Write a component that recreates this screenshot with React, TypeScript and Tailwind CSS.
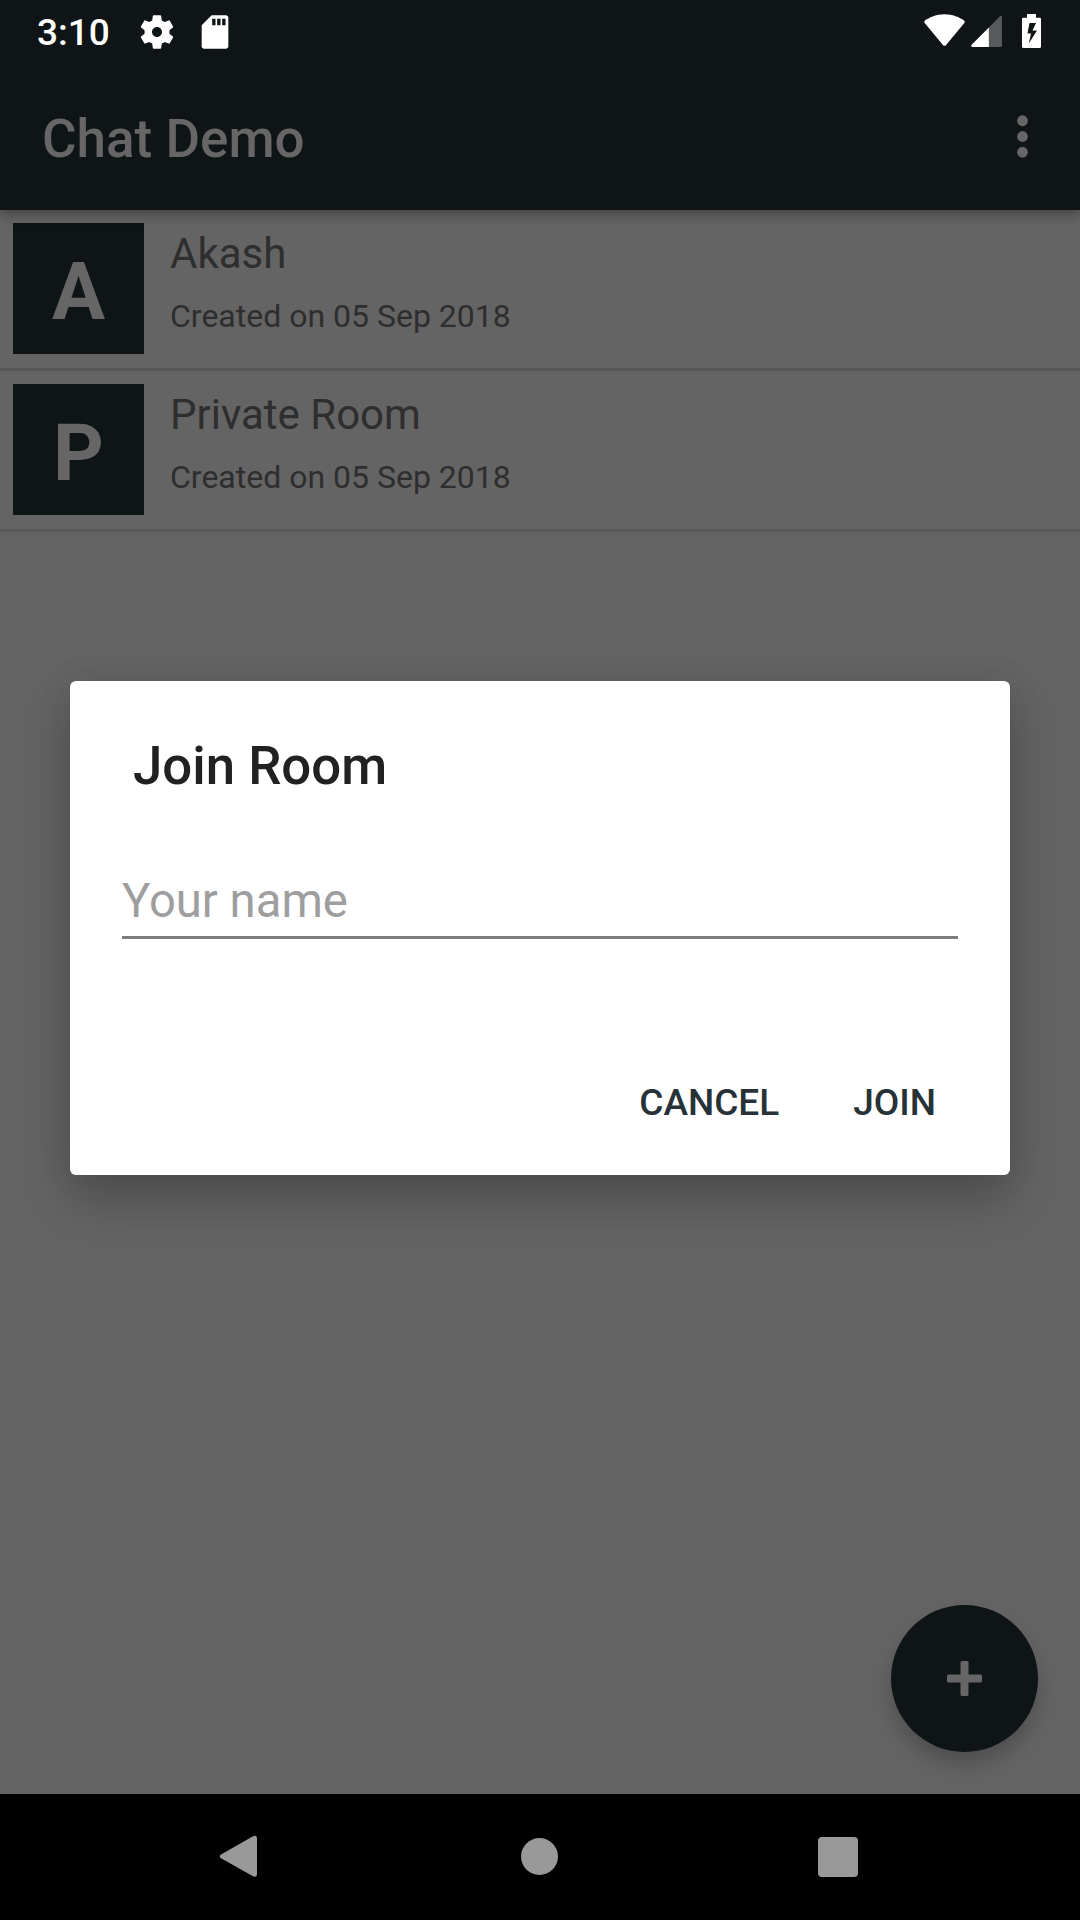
import React from "react";

function StatusBar() {
  return (
    <div className="flex h-[63px] items-center text-white">
      <span className="ml-[37px] w-[73px] pt-[2px] text-[37px] leading-[43px] font-medium whitespace-nowrap">3:10</span>
      <svg className="ml-[27px] h-[40px] w-[40px]" viewBox="0 0 24 24" fill="currentColor">
        <path d="M19.43 12.98c.04-.32.07-.64.07-.98s-.03-.66-.07-.98l2.11-1.65c.19-.15.24-.42.12-.64l-2-3.46c-.12-.22-.39-.3-.61-.22l-2.49 1c-.52-.4-1.08-.73-1.69-.98l-.38-2.65C14.46 2.18 14.25 2 14 2h-4c-.25 0-.46.18-.49.42l-.38 2.65c-.61.25-1.17.59-1.69.98l-2.49-1c-.23-.09-.49 0-.61.22l-2 3.46c-.13.22-.07.49.12.64l2.11 1.65c-.04.32-.07.65-.07.98s.03.66.07.98l-2.11 1.65c-.19.15-.24.42-.12.64l2 3.46c.12.22.39.3.61.22l2.49-1c.52.4 1.08.73 1.69.98l.38 2.65c.03.24.24.42.49.42h4c.25 0 .46-.18.49-.42l.38-2.65c.61-.25 1.17-.59 1.69-.98l2.49 1c.23.09.49 0 .61-.22l2-3.46c.12-.22.07-.49-.12-.64l-2.11-1.65zM12 15c-1.660 0-3-1.340-3-3s1.340-3 3-3 3 1.340 3 3-1.340 3-3 3z" />
      </svg>
      <svg className="ml-[18px] h-[40px] w-[40px]" viewBox="0 0 24 24" fill="currentColor">
        <path d="M18.500 2h-8.500L4.020 8 4 20.500c0 .9.6 1.500 1.500 1.500h13c.9 0 1.500-.6 1.500-1.500V3.500c0-.9-.6-1.500-1.500-1.500zM12.300 8h-2V4h2v4zm3 0h-2V4h2v4zm3 0h-2V4h2v4z" />
      </svg>
      <div className="mr-[39px] ml-auto flex h-[36px] items-start">
        <svg className="h-[36px] w-[42px]" viewBox="-0.5 0 42 36" fill="currentColor">
          <path d="M21 .3C29 .3 36 3.300 40.500 6.500Q41.900 7.600 40.800 9L22.600 31Q21 32.700 19.400 31L1.200 9Q.1 7.600 1.500 6.500C6 3.300 13 .3 21 .3Z" />
        </svg>
        <svg className="ml-[5px] h-[36px] w-[32px]" viewBox="-0.4 0 32 36" fill="currentColor">
          <path opacity=".3" d="M18.500 13.500L29.600 2.300Q31.500 1 31.500 3.500V31.500Q31.500 33 30 33H18.500Z" />
          <path d="M18.500 13.500V33H1.800Q.1 32.500 1 31Z" />
        </svg>
        <svg className="ml-[20px] h-[36px] w-[19px]" viewBox="0 0 19 36" fill="currentColor">
          <path fillRule="evenodd" d="M5 0H14V3.700H17.800Q19 3.700 19 5V32.500Q19 34 17.500 34H1.500Q0 34 0 32.500V5Q0 3.700 1.200 3.700H5ZM7.500 9L5.500 19.500H9L6.800 29.500L15 16.500H10.500L14 9Z" />
        </svg>
      </div>
    </div>
  );
}

function AppBar() {
  return (
    <header className="flex h-[147px] items-center justify-between pl-[42px] text-[#666666]">
      <h1 className="pt-[5px] text-[53px] leading-[62px] font-medium">Chat Demo</h1>
      <svg className="mr-[26px] h-[63px] w-[63px]" viewBox="0 0 24 24" fill="currentColor">
        <circle cx="12" cy="6" r="2.050" />
        <circle cx="12" cy="12" r="2.050" />
        <circle cx="12" cy="18" r="2.050" />
      </svg>
    </header>
  );
}

const rooms = [
  { name: "Akash", date: "Created on 05 Sep 2018" },
  { name: "Private Room", date: "Created on 05 Sep 2018" },
];

function RoomRow({ name, date }: { name: string; date: string }) {
  return (
    <li className="flex h-[161px] border-b-[3px] border-[#585858] pt-[13px] pl-[13px] text-[#2e2e2e]">
      <div className="flex h-[131px] w-[131px] items-center justify-center bg-[#0f1416] pt-[7px] text-[79px] leading-[92px] font-bold text-[#666666]">
        {name[0]}
      </div>
      <div className="ml-[26px] flex flex-col">
        <span className="mt-[6px] text-[42px] leading-[50px]">{name}</span>
        <span className="mt-[18px] text-[32px] leading-[38px]">{date}</span>
      </div>
    </li>
  );
}

function JoinDialog() {
  return (
    <div className="absolute top-[681px] left-[70px] flex h-[494px] w-[940px] flex-col rounded-[6px] bg-white px-[52px] shadow-[0_24px_50px_rgba(0,0,0,0.24),0_0_40px_rgba(0,0,0,0.06)]">
      <h2 className="mt-[54px] ml-[11px] text-[52.75px] leading-[62px] font-medium text-[#212121]">Join Room</h2>
      <div className="mt-[76px] h-[66px] border-b-[3px] border-[#7d7d7d] text-[47.25px] leading-[56px] text-[#9e9e9e]">Your name</div>
      <div className="mt-[142px] flex justify-end gap-[74px] pr-[22px] text-[37px] leading-[44px] font-medium text-[#263238]">
        <button>CANCEL</button>
        <button>JOIN</button>
      </div>
    </div>
  );
}

function NavBar() {
  return (
    <nav className="grid h-[126px] grid-cols-3 place-items-center bg-black px-[90px] text-[#999999]">
      <svg className="h-[48px] w-[48px]" viewBox="0 0 48 48" fill="currentColor">
        <path d="M37 3.300Q40.500 1.500 41 5V41.500Q40.500 45 37 43.200L5 25.300Q2.500 23.500 5 21.500Z" />
      </svg>
      <span className="mr-[1px] mb-[1px] h-[37px] w-[37px] rounded-full bg-[#999999]" />
      <span className="mr-[4px] h-[40px] w-[40px] rounded-[4px] bg-[#999999]" />
    </nav>
  );
}

export default function App() {
  return (
    <div className="relative flex h-[1920px] w-[1080px] flex-col overflow-hidden bg-[#646464] font-[Roboto,sans-serif]">
      <div className="z-10 bg-[#0f1416] shadow-[0_3px_12px_rgba(0,0,0,0.4)]">
        <StatusBar />
        <AppBar />
      </div>
      <ul className="flex-1">
        {rooms.map((room) => (
          <RoomRow key={room.name} {...room} />
        ))}
      </ul>
      <button className="absolute top-[1605px] left-[891px] flex h-[147px] w-[147px] items-center justify-center rounded-full bg-[#0f1416] shadow-[0_12px_20px_rgba(0,0,0,0.22)]">
        <svg className="h-[35px] w-[35px]" viewBox="0 0 35 35" fill="#666666">
          <rect x="13.500" y="0" width="8" height="35" rx="1.500" />
          <rect x="0" y="13.500" width="35" height="8" rx="1.500" />
        </svg>
      </button>
      <NavBar />
      <JoinDialog />
    </div>
  );
}
